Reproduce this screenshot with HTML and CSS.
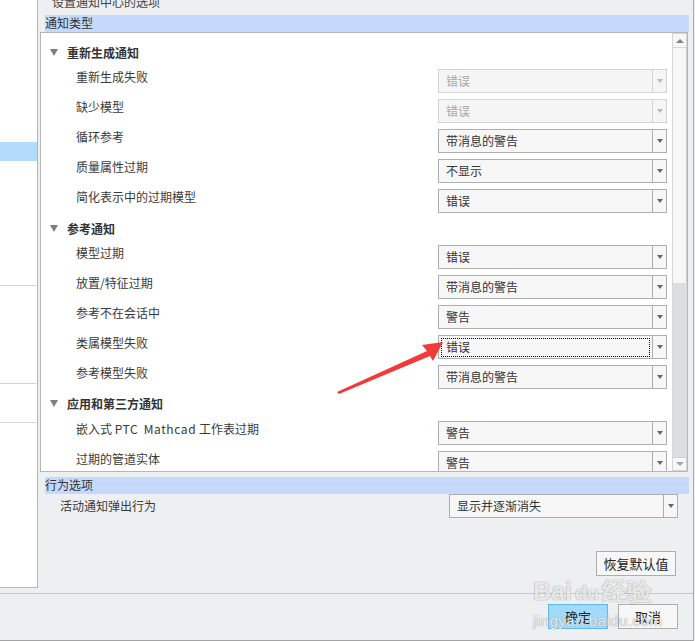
FILE: index.html
```html
<!DOCTYPE html>
<html lang="zh">
<head>
<meta charset="utf-8">
<link rel="stylesheet" href="styles.css">
</head>
<body>
<div class="app">
  <div class="top">
    <div class="sidebar">
      <div class="sel"></div>
      <div class="sep s1"></div>
      <div class="sep s2"></div>
      <div class="sep s3"></div>
    </div>
    <div class="main">
      <div class="title">设置通知中心的选项</div>
      <div class="shead">通知类型</div>
      <div class="tree">
        <div class="tree-body">
          <div class="ghead"><span class="tri"></span>重新生成通知</div>
          <div class="item"><span class="lbl">重新生成失败</span><div class="dd dis"><span class="val">错误</span><span class="arr"></span></div></div>
          <div class="item"><span class="lbl">缺少模型</span><div class="dd dis"><span class="val">错误</span><span class="arr"></span></div></div>
          <div class="item"><span class="lbl">循环参考</span><div class="dd"><span class="val">带消息的警告</span><span class="arr"></span></div></div>
          <div class="item"><span class="lbl">质量属性过期</span><div class="dd"><span class="val">不显示</span><span class="arr"></span></div></div>
          <div class="item"><span class="lbl">简化表示中的过期模型</span><div class="dd"><span class="val">错误</span><span class="arr"></span></div></div>

          <div class="ghead"><span class="tri"></span>参考通知</div>
          <div class="item"><span class="lbl">模型过期</span><div class="dd"><span class="val">错误</span><span class="arr"></span></div></div>
          <div class="item"><span class="lbl">放置/特征过期</span><div class="dd"><span class="val">带消息的警告</span><span class="arr"></span></div></div>
          <div class="item"><span class="lbl">参考不在会话中</span><div class="dd"><span class="val">警告</span><span class="arr"></span></div></div>
          <div class="item"><span class="lbl">类属模型失败</span><div class="dd focus"><span class="val">错误</span><span class="arr"></span></div></div>
          <div class="item"><span class="lbl">参考模型失败</span><div class="dd"><span class="val">带消息的警告</span><span class="arr"></span></div></div>

          <div class="ghead g3"><span class="tri"></span>应用和第三方通知</div>
          <div class="item"><span class="lbl">嵌入式 <span class="lat">PTC</span>&nbsp; <span class="lat">Mathcad</span> 工作表过期</span><div class="dd"><span class="val">警告</span><span class="arr"></span></div></div>
          <div class="item"><span class="lbl">过期的管道实体</span><div class="dd"><span class="val">警告</span><span class="arr"></span></div></div>
        </div>
        <div class="vscroll">
          <div class="sbtn up"><span class="utri"></span></div>
          <div class="thumb"></div>
          <div class="track"></div>
          <div class="sbtn down"><span class="dtri"></span></div>
        </div>
      </div>
      <div class="shead behavior">行为选项</div>
      <div class="brow">
        <span class="blbl">活动通知弹出行为</span>
        <div class="dd wide"><span class="val">显示并逐渐消失</span><span class="arr"></span></div>
      </div>
      <div class="reset-row"><button class="btn">恢复默认值</button></div>
    </div>
  </div>
  <div class="footer">
    <button class="btn ok">确定</button>
    <button class="btn">取消</button>
  </div>

  <svg class="redarrow" width="695" height="641" viewBox="0 0 695 641">
    <polygon points="443,342 422,345 427,351 337,392 339,394 430,356 433,361" fill="#f23a3a"/>
  </svg>
  <div class="watermark">
    <div class="wm1">Bai<span class="du">du</span>经验</div>
    <div class="wm2">jingyan.baidu.com</div>
  </div>
</div>
</body>
</html>
```

FILE: styles.css
```css
* { box-sizing: border-box; }
html, body { margin: 0; padding: 0; }
body {
  background: #f0f0f0;
  font-family: "Noto Sans CJK SC", "Noto Sans", sans-serif;
  font-size: 12px;
  color: #333;
}
.app {
  position: relative;
  width: 694px;
  height: 641px;
  border-right: 1px solid #a9a9a9;
  background: #eeeff1;
  overflow: hidden;
}
.top {
  display: flex;
  height: 593px;
}
.sidebar {
  width: 38px;
  height: 588px;
  background: #fff;
  border-right: 1px solid #b5b5b5;
  border-bottom: 1px solid #b5b5b5;
  flex: none;
}
.sel {
  margin-top: 142px;
  height: 19px;
  background: #b2dcfa;
}
.sep {
  width: 36px;
  height: 1px;
  background: #d2d2d2;
}
.s1 { margin-top: 124px; }
.s2 { margin-top: 97px; }
.s3 { margin-top: 38px; }

.main {
  flex: 1;
  display: flex;
  flex-direction: column;
  min-width: 0;
}
.title {
  margin-top: -5px;
  height: 20px;
  line-height: 14px;
  padding-left: 14px;
  color: #444;
}
.shead {
  margin: 0 4px 0 7px;
  height: 17px;
  line-height: 16px;
  background: #c4d9fb;
  color: #333;
}
.tree {
  margin: 0 5px 0 2px;
  height: 440px;
  border: 1px solid #b6b6b6;
  background: #fff;
  display: flex;
  overflow: hidden;
}
.tree-body {
  flex: 1;
  padding-top: 7px;
  overflow: hidden;
}
.ghead {
  height: 26px;
  line-height: 24px;
  padding-left: 9px;
  font-weight: bold;
  color: #333;
  display: flex;
  align-items: center;
}
.ghead.g3 { align-items: flex-start; padding-top: 0; }
.ghead.g3 .tri { margin-top: 8px; }
.tri {
  width: 0;
  height: 0;
  border-left: 4.5px solid transparent;
  border-right: 4.5px solid transparent;
  border-top: 7px solid #7f7f7f;
  margin-right: 9px;
  margin-top: -2px;
}
.item {
  height: 30px;
  display: flex;
  padding-left: 35px;
}
.lbl {
  width: 362px;
  flex: none;
  margin-top: 2px;
  line-height: 18px;
  height: 18px;
  color: #3a3a3a;
  white-space: pre;
}
.lat { letter-spacing: 0.6px; }
.dd {
  position: relative;
  width: 229px;
  height: 24px;
  margin-top: 3px;
  border: 1px solid #aeaeae;
  background: #f7f7f7;
  display: flex;
  flex: none;
}
.dd .val {
  flex: 1;
  padding-left: 7px;
  line-height: 22px;
  color: #333;
}
.dd .arr {
  width: 14px;
  border-left: 1px solid #aeaeae;
  display: flex;
  align-items: center;
  justify-content: center;
}
.dd .arr::before {
  content: "";
  width: 0;
  height: 0;
  border-left: 3.5px solid transparent;
  border-right: 3.5px solid transparent;
  border-top: 4px solid #666;
}
.dd.dis { border-color: #d4d4d4; background: #f5f5f5; }
.dd.dis .val { color: #a8a8a8; }
.dd.dis .arr { border-left-color: #d4d4d4; }
.dd.dis .arr::before { border-top-color: #b8b8b8; }
.dd.focus .val { position: relative; }
.dd.focus .val::after {
  content: "";
  position: absolute;
  left: 2px;
  right: 2px;
  top: 2px;
  bottom: 1px;
  border: 1px dotted #000;
}

.vscroll {
  width: 15px;
  flex: none;
  display: flex;
  flex-direction: column;
  border-left: 1px solid #d6d6d6;
}
.sbtn {
  height: 15px;
  background: #f7f7f7;
  border: 1px solid #d4d4d4;
  border-left: none;
  display: flex;
  align-items: center;
  justify-content: center;
}
.utri {
  width: 0; height: 0;
  border-left: 4px solid transparent;
  border-right: 4px solid transparent;
  border-bottom: 4px solid #808080;
}
.dtri {
  width: 0; height: 0;
  border-left: 4px solid transparent;
  border-right: 4px solid transparent;
  border-top: 4px solid #a5a5a5;
}
.thumb {
  height: 235px;
  background: #f7f7f7;
  border-right: 1px solid #c9c9c9;
}
.track {
  flex: 1;
  background: #dcdddf;
}
.sbtn.down { height: 14px; }

.behavior { margin-top: 5px; }
.brow {
  display: flex;
  height: 24px;
  padding-left: 22px;
}
.blbl {
  flex: 1;
  line-height: 24px;
  color: #3a3a3a;
}
.dd.wide {
  margin-top: 0;
  margin-right: 15px;
}
.reset-row {
  display: flex;
  justify-content: flex-end;
  margin-top: 33px;
  padding-right: 17px;
}
.btn {
  font-family: "Noto Sans CJK SC", "Noto Sans", sans-serif;
  font-size: 13px;
  color: #222;
  height: 25px;
  width: 60px;
  padding: 0;
  border: 1px solid #adadad;
  background: #f7f7f7;
  line-height: 22px;
}
.reset-row .btn { width: 80px; }
.footer {
  height: 48px;
  border-top: 1px solid #c6c6c6;
  border-bottom: 1px solid #a3a3a3;
  display: flex;
  justify-content: flex-end;
  gap: 10px;
  padding: 10px 15px 0 0;
}
.btn.ok {
  background: #a2dafb;
  border-color: #5ab9f0;
}

.redarrow {
  position: absolute;
  left: 0;
  top: 0;
  pointer-events: none;
}
.watermark {
  position: absolute;
  left: 533px;
  top: 579px;
  color: rgba(255, 255, 255, 0.8);
  font-family: "Liberation Sans", Arial, sans-serif;
  font-weight: bold;
  text-shadow: 0 0 1px rgba(140, 140, 140, 0.7), 0 0 1px rgba(140, 140, 140, 0.7);
  pointer-events: none;
  line-height: 1;
}
.wm1 { font-size: 25px; }
.wm1 .du { font-size: 20px; margin: 0 3px; }
.wm2 { font-size: 15px; font-weight: normal; margin-top: 9px; letter-spacing: 0.5px; }
```
